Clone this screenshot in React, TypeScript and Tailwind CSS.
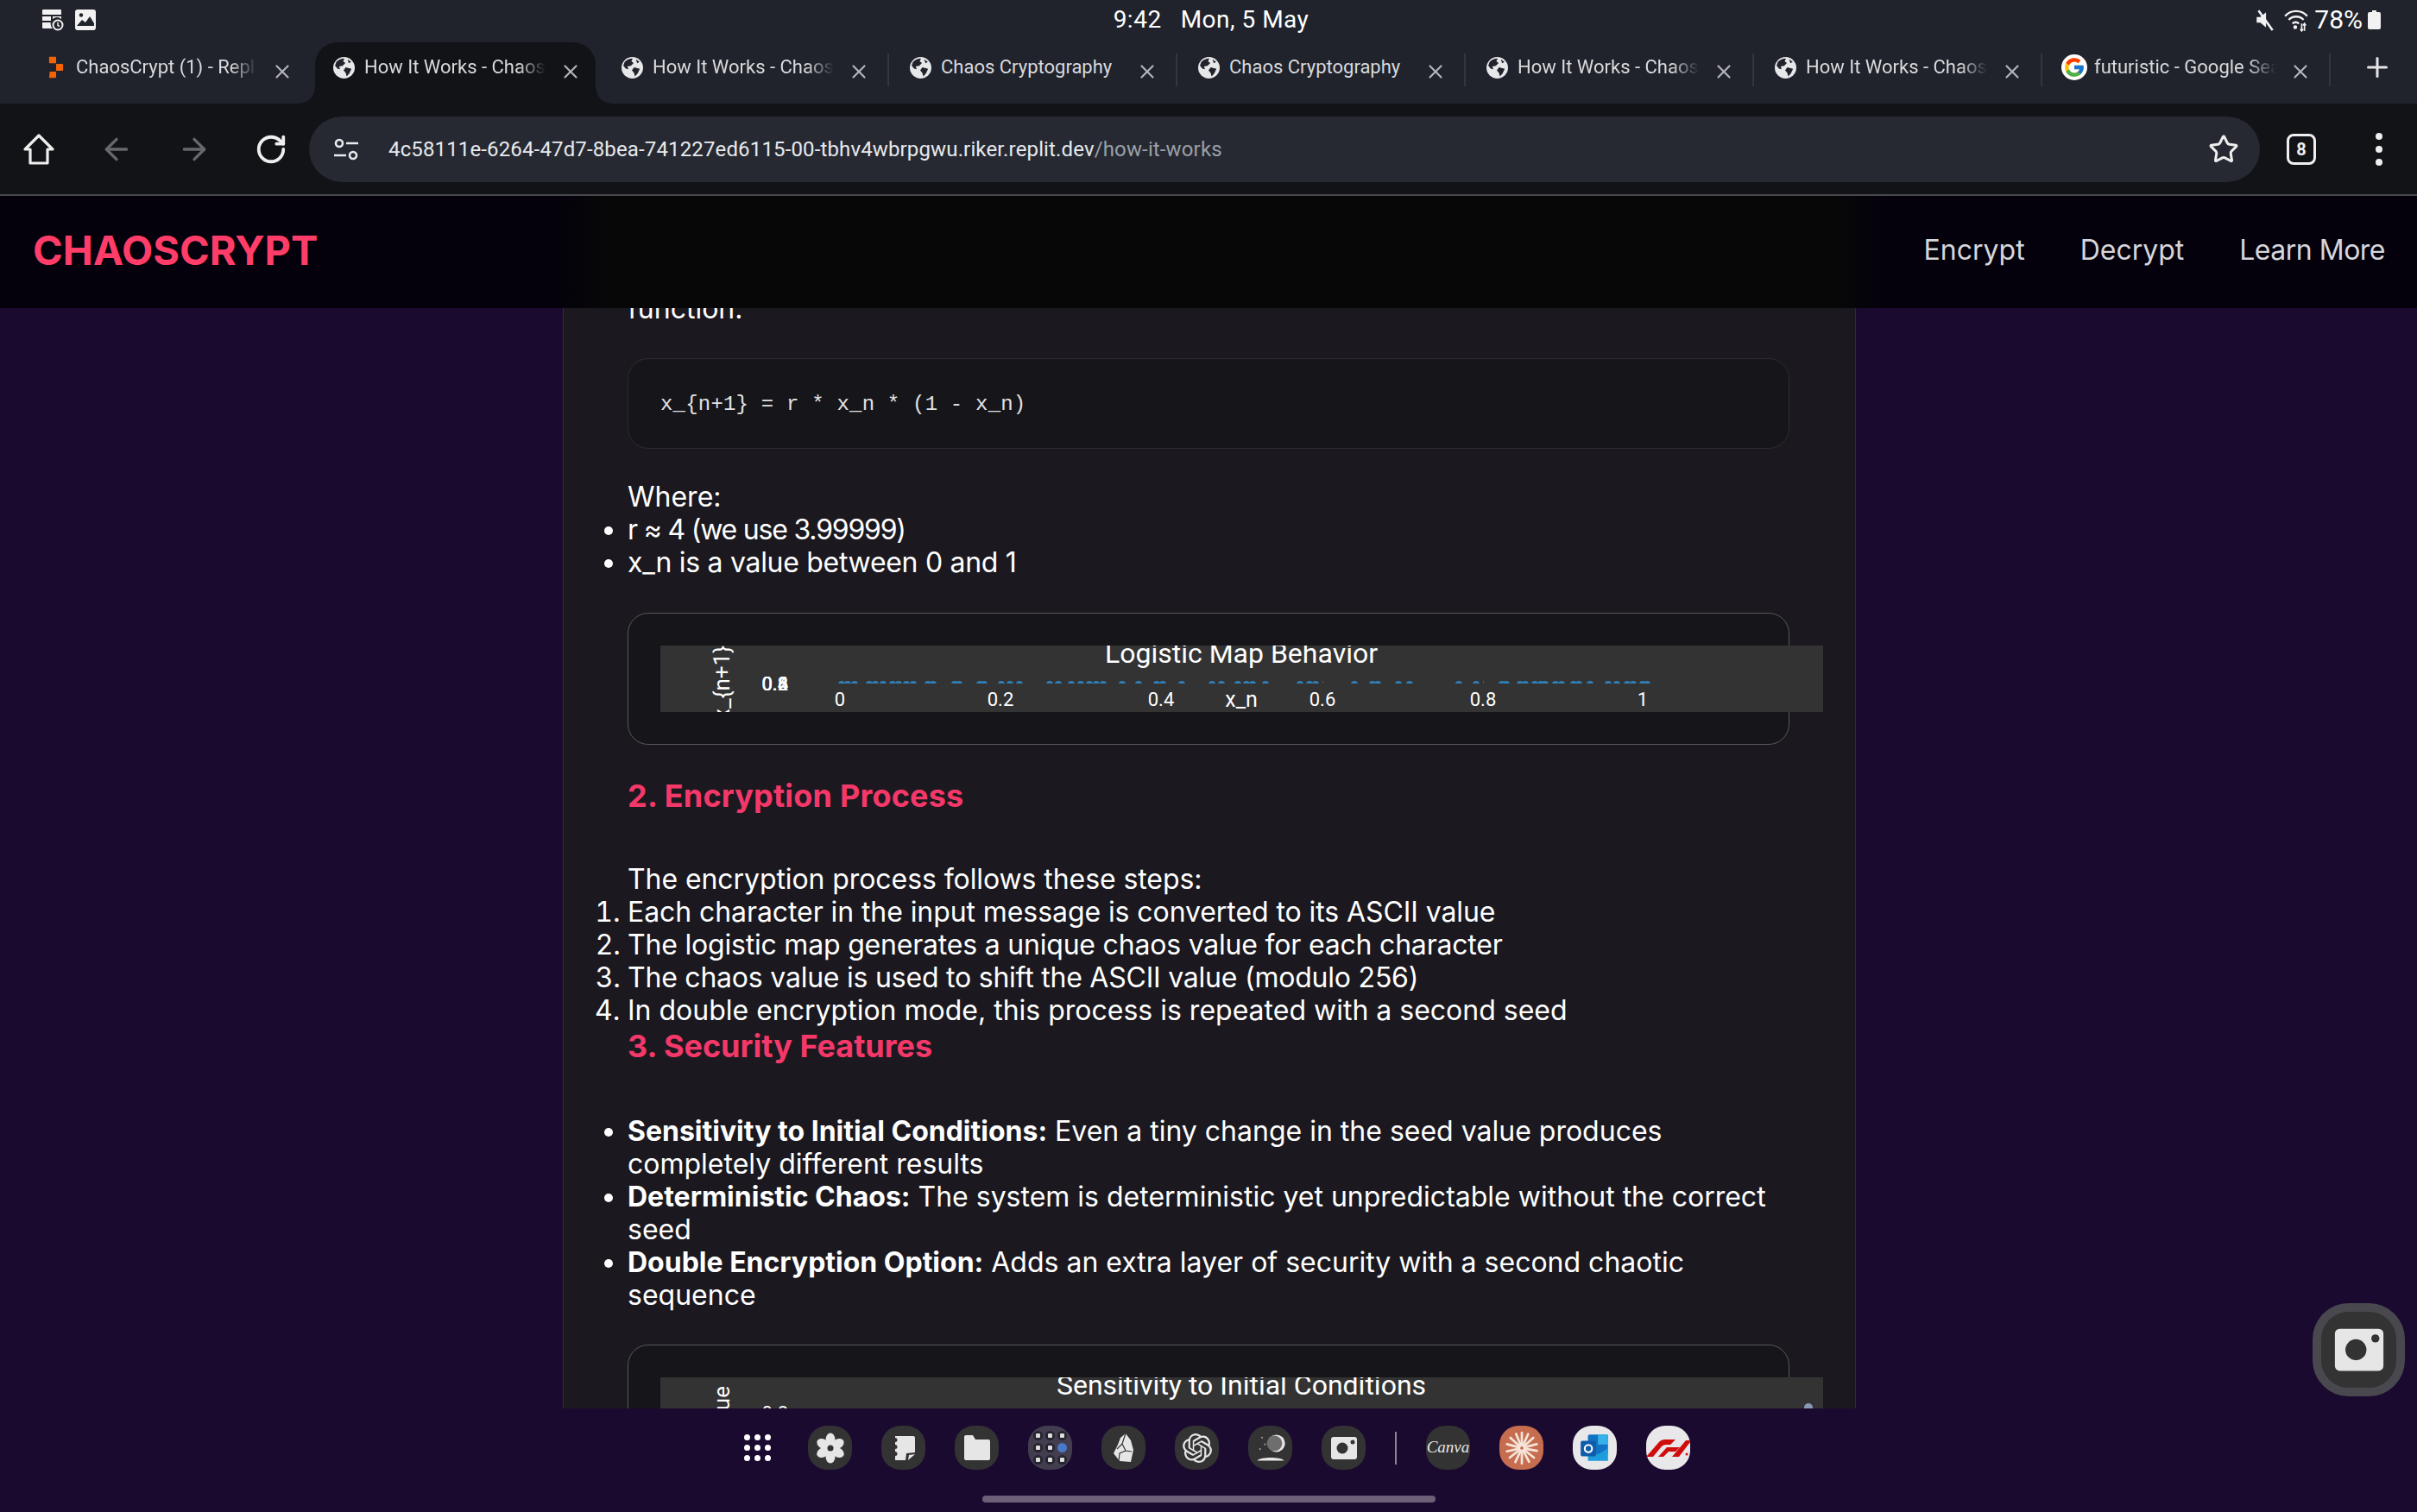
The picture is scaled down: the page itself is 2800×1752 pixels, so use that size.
import React from "react";
import { ArrowLeft, ArrowRight, Plus, RotateCw, Star, X } from "lucide-react";
import { FcGoogle } from "react-icons/fc";
import { SiOpenai } from "react-icons/si";

// --- CONTENT DATA ---
const tabs = [
  { title: "ChaosCrypt (1) - Replit", icon: "replit", sep: false },
  { title: "How It Works - Chaos-Hub", icon: "globe", active: true, sep: false },
  { title: "How It Works - Chaos-Hub", icon: "globe", sep: true },
  { title: "Chaos Cryptography", icon: "globe", sep: true, full: true },
  { title: "Chaos Cryptography", icon: "globe", sep: true, full: true },
  { title: "How It Works - Chaos-Hub", icon: "globe", sep: true },
  { title: "How It Works - Chaos-Hub", icon: "globe", sep: true },
  { title: "futuristic - Google Search", icon: "google", sep: true },
];

const dotsX = [
  975, 982, 990, 1007, 1014, 1023, 1034, 1041, 1050, 1058, 1075, 1081, 1106, 1111, 1135, 1140, 1160, 1170, 1181, 1216,
  1226, 1241, 1252, 1262, 1270, 1278, 1300, 1319, 1340, 1347, 1369, 1404, 1415, 1434, 1444, 1451, 1466, 1506, 1517,
  1524, 1569, 1590, 1596, 1620, 1633, 1690, 1710, 1740, 1745, 1761, 1767, 1778, 1785, 1790, 1802, 1809, 1823, 1829,
  1842, 1863, 1873, 1885, 1892, 1903, 1908,
];
const xTicks = [
  { label: "0", x: 973 },
  { label: "0.2", x: 1159 },
  { label: "0.4", x: 1345 },
  { label: "0.6", x: 1532 },
  { label: "0.8", x: 1718 },
  { label: "1", x: 1903 },
];

function Globe() {
  return (
    <svg viewBox="0 0 24 24" className="w-[25px] h-[25px] shrink-0">
      <circle cx="12" cy="12" r="12" fill="#e6e7e9" />
      <path
        fill="#20232c"
        d="M3.5 5.5C6 2.8 9 1.6 12.5 1.6L11 4.8l2.5 1.8-3 3.2-4 .7 1.2 3.2-3-.8L2 9.5zM14 11.5l6.3 1.8-2.3 5-3 3.3-1.2-4.2-2.3-2.6zM16 2.6l4 3-2.6 1.4z"
      />
    </svg>
  );
}

function Replit() {
  return (
    <svg viewBox="0 0 24 32" className="w-[20px] h-[26px] shrink-0">
      <path fill="#f26207" d="M2 1h9a1 1 0 0 1 1 1v8H3a1 1 0 0 1-1-1zM12 11h9a1 1 0 0 1 1 1v8a1 1 0 0 1-1 1h-9zM3 22h9v8a1 1 0 0 1-1 1H2z" />
    </svg>
  );
}

function Tab({ tab }: { tab: (typeof tabs)[number] }) {
  return (
    <div className="w-[334px] h-full flex shrink-0">
      <div className={`relative w-[325px] h-full flex items-center pl-[21px] pb-[13px] rounded-t-[26px] ${tab.active ? "bg-[#121317]" : ""}`}>
        {tab.active && (
          <>
            <div className="absolute bottom-0 -left-[18px] w-[18px] h-[18px] bg-[radial-gradient(circle_at_0_0,transparent_17px,#121317_18px)]" />
            <div className="absolute bottom-0 -right-[18px] w-[18px] h-[18px] bg-[radial-gradient(circle_at_100%_0,transparent_17px,#121317_18px)]" />
          </>
        )}
        <div className="w-[25px] flex justify-center shrink-0">
          {tab.icon === "globe" && <Globe />}
          {tab.icon === "replit" && <Replit />}
          {tab.icon === "google" && (
            <div className="w-[30px] h-[30px] rounded-full bg-white flex items-center justify-center shrink-0">
              <FcGoogle className="w-[26px] h-[26px]" />
            </div>
          )}
        </div>
        <div
          className={`ml-[11px] w-[210px] overflow-hidden whitespace-nowrap text-[22px] leading-[30px] text-[#d9dadc] font-['Roboto',sans-serif] ${
            tab.full ? "" : "[mask-image:linear-gradient(to_right,#000_85%,transparent_100%)]"
          }`}
        >
          {tab.title}
        </div>
        <X className="ml-[16px] mt-[10px] w-[26px] h-[26px] text-[#b4b5b8] shrink-0" strokeWidth={2} />
      </div>
      {tab.sep && <div className="ml-[4px] mt-[13px] w-[2px] h-[38px] bg-[#33363f]" />}
    </div>
  );
}

function StatusBar() {
  return (
    <div className="h-[49px] grid grid-cols-[1fr_auto_1fr] items-center pl-[48px] pr-[42px] pb-[4px] text-white font-['Roboto',sans-serif]">
      <div className="flex items-center gap-[12px]">
        <svg viewBox="0 0 26 26" className="w-[26px] h-[26px]">
          <path fill="#f2f2f2" d="M2 1h20a1 1 0 0 1 1 1v10a7 7 0 0 0-10 11H2a1 1 0 0 1-1-1V2a1 1 0 0 1 1-1z" />
          <path stroke="#20232c" strokeWidth="2" d="M1 8h22M1 15h12M12 8v7" />
          <circle cx="19" cy="19" r="5.5" fill="none" stroke="#f2f2f2" strokeWidth="2" />
          <path stroke="#f2f2f2" strokeWidth="1.5" fill="none" d="M19 16v3.5l2 1" />
        </svg>
        <svg viewBox="0 0 26 26" className="w-[26px] h-[26px]">
          <rect x="1" y="1" width="24" height="24" rx="3" fill="#f2f2f2" />
          <path fill="#20232c" d="M3 20l6-7 4 3 5-7 5 8v3H3z" />
          <circle cx="8" cy="7.5" r="2.2" fill="#20232c" />
        </svg>
      </div>
      <div className="flex gap-[22px] text-[28px] leading-[34px] tracking-[0.5px]">
        <span>9:42</span>
        <span>Mon, 5 May</span>
      </div>
      <div className="flex items-center justify-end gap-[6px]">
        <svg viewBox="0 0 24 24" className="w-[26px] h-[26px]">
          <path fill="#f2f2f2" d="M3 9h4l6-5v16l-6-5H3z" />
          <path stroke="#f2f2f2" strokeWidth="2.4" d="M5 2l15 21" />
        </svg>
        <svg viewBox="0 0 28 28" className="w-[30px] h-[30px] ml-[2px]" fill="none" stroke="#f2f2f2" strokeWidth="2.2">
          <path d="M2 10a16 16 0 0 1 24 0M6 14a11 11 0 0 1 16 0M10 18a5.500 5.500 0 0 1 7 0" />
          <circle cx="13" cy="22" r="1" fill="#f2f2f2" />
          <path strokeWidth="1.6" d="M20 18v8M23 26v-8M18.500 24l1.500 2 1.500-2M21.500 20l1.500-2 1.500 2" />
        </svg>
        <span className="text-[30px] leading-[34px]">78%</span>
        <svg viewBox="0 0 15 22" className="w-[15px] h-[22px]">
          <path fill="#f2f2f2" d="M5 0h5v2h3a2 2 0 0 1 2 2v16a2 2 0 0 1-2 2H2a2 2 0 0 1-2-2V4a2 2 0 0 1 2-2h3z" />
        </svg>
      </div>
    </div>
  );
}

function Toolbar() {
  return (
    <div className="h-[107px] bg-[#121317] border-b-2 border-[#48494d] flex items-center pl-[25px]">
      <div className="flex items-center gap-[50px]">
        <svg viewBox="0 0 40 40" className="w-[40px] h-[40px]" fill="none" stroke="#eeeeee" strokeWidth="3.2" strokeLinejoin="round">
          <path d="M20 4L36 20H30V36H10V20H4Z" />
        </svg>
        <ArrowLeft className="w-[40px] h-[40px] text-[#66686c]" strokeWidth={2} />
        <ArrowRight className="w-[40px] h-[40px] text-[#66686c]" strokeWidth={2} />
        <RotateCw className="w-[38px] h-[38px] text-[#eeeeee]" strokeWidth={2.4} />
      </div>
      <div className="ml-[25px] w-[2260px] h-[76px] rounded-full bg-[#262932] flex items-center pl-[28px] pr-[24px] shrink-0">
        <svg viewBox="0 0 30 30" className="w-[30px] h-[30px] shrink-0" fill="none" stroke="#e8eaed" strokeWidth="2.6">
          <circle cx="7" cy="8" r="4" />
          <path d="M15 8h14M1 22h14" />
          <circle cx="23" cy="22" r="4" />
        </svg>
        <div className="ml-[34px] flex-1 whitespace-nowrap text-[24px] tracking-[0.14px] text-[#e8eaed] font-['Roboto',sans-serif]">
          4c58111e-6264-47d7-8bea-741227ed6115-00-tbhv4wbrpgwu.riker.replit.dev
          <span className="text-[#9aa0a6]">/how-it-works</span>
        </div>
        <Star className="w-[36px] h-[36px] text-[#eeeeee]" strokeWidth={2} />
      </div>
      <div className="ml-[31px] w-[34px] h-[36px] rounded-[8px] border-[3px] border-[#eeeeee] flex items-center justify-center text-[20px] font-bold text-[#eeeeee] font-['Roboto',sans-serif] shrink-0">
        8
      </div>
      <div className="ml-[69px] flex flex-col gap-[7px] shrink-0">
        <div className="w-[8px] h-[8px] rounded-full bg-[#eeeeee]" />
        <div className="w-[8px] h-[8px] rounded-full bg-[#eeeeee]" />
        <div className="w-[8px] h-[8px] rounded-full bg-[#eeeeee]" />
      </div>
    </div>
  );
}

function LogisticPlot() {
  return (
    <svg width="1347" height="77" className="block shrink-0 font-['Roboto',sans-serif]">
      <defs>
        <clipPath id="band">
          <rect x="0" y="0" width="1347" height="44" />
        </clipPath>
      </defs>
      <rect width="1347" height="77" fill="#333333" />
      <text x="673" y="20" textAnchor="middle" fill="#ffffff" className="text-[32px]">
        Logistic Map Behavior
      </text>
      <g clipPath="url(#band)">
        {dotsX.map((x) => (
          <circle key={x} cx={x - 765} cy="45" r="4" fill="#2f7fb8" />
        ))}
      </g>
      <rect x="767" y="41" width="1" height="3" fill="#555" />
      <rect x="953" y="41" width="1" height="3" fill="#555" />
      {xTicks.map((t) => (
        <text key={t.label} x={t.x - 765} y="70" textAnchor="middle" fill="#ffffff" className="text-[22px]">
          {t.label}
        </text>
      ))}
      <text x="673" y="71" textAnchor="middle" fill="#ffffff" className="text-[25px]">
        x_n
      </text>
      {["0.2", "0.4", "0.6", "0.8"].map((t) => (
        <text key={t} x="148" y="52" textAnchor="end" fill="#ffffff" className="text-[22px]">
          {t}
        </text>
      ))}
      <text transform="translate(80 0) rotate(-90)" textAnchor="end" fill="#ffffff" className="text-[26px]">
        x_{"{n+1}"}
      </text>
    </svg>
  );
}

function SensitivityPlot() {
  return (
    <svg width="1347" height="77" className="block shrink-0 font-['Roboto',sans-serif]">
      <rect width="1347" height="77" fill="#333333" />
      <text x="673" y="20" textAnchor="middle" fill="#ffffff" className="text-[32px]">
        Sensitivity to Initial Conditions
      </text>
      <text transform="translate(80 10) rotate(-90)" textAnchor="end" fill="#ffffff" className="text-[26px]">
        Value
      </text>
      <text x="148" y="49" textAnchor="end" fill="#ffffff" className="text-[22px]">
        0.8
      </text>
      <circle cx="1330" cy="35" r="5" fill="#8a99b8" />
    </svg>
  );
}

function Article() {
  return (
    <div className="-mt-[18px] pl-[74px] text-[32px] leading-[38px] text-white font-['Inter',sans-serif]">
      <p>function.</p>

      <div className="mt-[38px] w-[1346px] h-[105px] rounded-[24px] border border-[#2c2c32] bg-[#16151a] flex items-center px-[37px] pt-[2px] text-[24px] tracking-[0.2px] text-[#e2e2e2] font-['Liberation_Mono',monospace]">
        {"x_{n+1} = r * x_n * (1 - x_n)"}
      </div>

      <p className="mt-[37px]">Where:</p>
      <ul className="list-disc">
        <li className="tracking-[-1.2px]">r ≈ 4 (we use 3.99999)</li>
        <li className="tracking-[-0.3px]">x_n is a value between 0 and 1</li>
      </ul>

      <div className="mt-[39px] w-[1346px] h-[153px] rounded-[24px] border border-[#58585c] bg-[#16151a] pl-[37px] pt-[37px]">
        <LogisticPlot />
      </div>

      <h3 className="mt-[37px] text-[36px] leading-[44px] tracking-[0.2px] font-bold text-[#f5386a]">2. Encryption Process</h3>
      <p className="mt-[56px] tracking-[-0.08px]">The encryption process follows these steps:</p>
      <ol className="list-decimal">
        <li className="tracking-[-0.08px]">Each character in the input message is converted to its ASCII value</li>
        <li className="tracking-[-0.2px]">The logistic map generates a unique chaos value for each character</li>
        <li className="tracking-[-0.22px]">The chaos value is used to shift the ASCII value (modulo 256)</li>
        <li>In double encryption mode, this process is repeated with a second seed</li>
      </ol>

      <h3 className="text-[36px] leading-[44px] font-bold text-[#f5386a]">3. Security Features</h3>
      <ul className="mt-[58px] w-[1346px] list-disc">
        <li>
          <strong className="font-bold">Sensitivity to Initial Conditions:</strong> Even a tiny change in the seed value produces completely different results
        </li>
        <li>
          <strong className="font-bold">Deterministic Chaos:</strong> The system is deterministic yet unpredictable without the correct seed
        </li>
        <li>
          <strong className="font-bold">Double Encryption Option:</strong> Adds an extra layer of security with a second chaotic sequence
        </li>
      </ul>

      <div className="mt-[38px] w-[1346px] h-[153px] rounded-[24px] border border-[#58585c] bg-[#16151a] pl-[37px] pt-[37px]">
        <SensitivityPlot />
      </div>
    </div>
  );
}

// Dock icons
function DockIcon({ children, bg = "bg-[#333333]" }: { children: React.ReactNode; bg?: string }) {
  return <div className={`w-[51px] h-[51px] rounded-[22px] flex items-center justify-center shrink-0 ${bg}`}>{children}</div>;
}

function Flower() {
  return (
    <svg viewBox="0 0 36 36" className="w-[36px] h-[36px]">
      {[0, 60, 120, 180, 240, 300].map((a) => (
        <ellipse key={a} cx="18" cy="8" rx="5.500" ry="7.500" fill="#e6e6e6" transform={`rotate(${a} 18 18)`} />
      ))}
      <circle cx="18" cy="18" r="3.500" fill="#333333" />
    </svg>
  );
}

function CameraGlyph({ className }: { className: string }) {
  return (
    <svg viewBox="0 0 32 32" className={className}>
      <rect x="1" y="3" width="30" height="26" rx="3" fill="#e6e6e6" />
      <circle cx="14" cy="16" r="6.500" fill="#333333" />
      <circle cx="26" cy="9" r="2.500" fill="#333333" />
    </svg>
  );
}

function Dock() {
  return (
    <div className="h-[120px] flex flex-col items-center">
      <div className="mt-[20px] flex items-center gap-[34px] pl-[10px]">
        <div className="w-[50px] flex justify-center">
          <div className="w-[31px] grid grid-cols-3 gap-[5px]">
            {[0, 1, 2, 3, 4, 5, 6, 7, 8].map((i) => (
              <div key={i} className="w-[7px] h-[7px] rounded-full bg-white" />
            ))}
          </div>
        </div>
        <DockIcon>
          <Flower />
        </DockIcon>
        <DockIcon>
          <svg viewBox="0 0 32 32" className="w-[32px] h-[32px]">
            <path fill="#e6e6e6" d="M6 2h21a2 2 0 0 1 2 2v17l-10 1-1 8H6V25a2 2 0 0 0 0-5v-3a2 2 0 0 0 0-5V9a2 2 0 0 0 0-5z" />
            <path fill="#e6e6e6" d="M21 30l1-6 7-1z" />
          </svg>
        </DockIcon>
        <DockIcon>
          <svg viewBox="0 0 32 32" className="w-[32px] h-[32px]">
            <path fill="#e6e6e6" d="M1 3a2 2 0 0 1 2-2h8l3 5h15a2 2 0 0 1 2 2v20a2 2 0 0 1-2 2H3a2 2 0 0 1-2-2z" />
          </svg>
        </DockIcon>
        <DockIcon bg="bg-[#423e50]">
          <div className="grid grid-cols-3 gap-[3px]">
            {[0, 1, 2, 3, 4, 5, 6, 7, 8].map((i) => (
              <div key={i} className={`w-[11px] h-[11px] rounded-full flex items-center justify-center ${i === 5 ? "bg-[#4a78c8]" : "bg-[#26242e]"}`}>
                {i !== 5 && <div className="w-[5px] h-[5px] rounded-[1px] bg-[#dddddd]" />}
              </div>
            ))}
          </div>
        </DockIcon>
        <DockIcon>
          <svg viewBox="0 0 32 36" className="w-[32px] h-[38px]">
            <path fill="#e6e6e6" d="M18 1l6 8 3 11-3 14-13-1-7-9 5-10 3-8z" />
            <path stroke="#333333" strokeWidth="1.2" fill="none" d="M18 1l-4 12 4 8 7 1M18 21l-7 3-1 9M14 13l-6 6" />
          </svg>
        </DockIcon>
        <DockIcon>
          <SiOpenai className="w-[34px] h-[34px] text-[#e6e6e6]" />
        </DockIcon>
        <DockIcon>
          <svg viewBox="0 0 36 36" className="w-[40px] h-[40px]">
            <circle cx="24" cy="13" r="9" fill="#e6e6e6" />
            <circle cx="22" cy="13" r="8" fill="#6e6e6e" />
            <path fill="#e6e6e6" d="M4 31c4-4 24-4 28 0z" />
            <circle cx="9" cy="7" r="1" fill="#999" />
            <circle cx="12" cy="14" r="1" fill="#999" />
            <circle cx="7" cy="19" r="1" fill="#999" />
          </svg>
        </DockIcon>
        <DockIcon>
          <CameraGlyph className="w-[32px] h-[32px]" />
        </DockIcon>
        <div className="w-[2px] h-[38px] bg-[#8a8494]" />
        <DockIcon>
          <span className="text-[19px] italic text-[#e6e6e6] font-['Liberation_Serif',serif]">Canva</span>
        </DockIcon>
        <DockIcon bg="bg-[#c56d4e]">
          <svg viewBox="0 0 40 40" className="w-[42px] h-[42px]" stroke="#f6e4da" strokeWidth="2.6" strokeLinecap="round">
            {[0, 24, 48, 75, 100, 128, 152, 180, 205, 232, 258, 285, 312, 338].map((a) => (
              <path key={a} d="M20 17V3" transform={`rotate(${a} 20 20)`} />
            ))}
          </svg>
        </DockIcon>
        <DockIcon bg="bg-[#e8e8ea]">
          <svg viewBox="0 0 36 36" className="w-[38px] h-[38px]">
            <rect x="10" y="3" width="22" height="22" rx="2" fill="#1273c4" />
            <rect x="21" y="3" width="11" height="11" fill="#36b0e8" />
            <path fill="#1d9ddb" d="M10 18l11 7 11-7v14H10z" />
            <rect x="2" y="10" width="17" height="17" rx="2" fill="#0f5cab" />
            <circle cx="10.500" cy="18.500" r="4" fill="none" stroke="#ffffff" strokeWidth="2" />
          </svg>
        </DockIcon>
        <DockIcon bg="bg-[#e8e8ea]">
          <svg viewBox="0 0 51 24" className="w-[51px] h-[24px]">
            <path fill="#d10c0c" d="M0 22L14 6q3-4 8-4h12l-6 6H23q-3 0-5 2l-10 12zM14 22l10-11h15l-5 5h-8l-6 6zM30 22L46 3h5v2L38 22z" />
            <circle cx="47" cy="19" r="1.500" fill="#d10c0c" />
          </svg>
        </DockIcon>
      </div>
      <div className="mt-[30px] w-[525px] h-[8px] rounded-full bg-[#6b6078]" />
    </div>
  );
}

export default function App() {
  return (
    <div className="relative w-[2800px] h-[1752px] overflow-hidden flex flex-col bg-[#1b0a30]">
      {/* Browser chrome */}
      <div className="bg-[#20232c]">
        <StatusBar />
        <div className="h-[71px] flex pl-[31px]">
          {tabs.map((tab, i) => (
            <Tab key={i} tab={tab} />
          ))}
          <Plus className="ml-[33px] mt-[11px] w-[36px] h-[36px] text-[#e4e4e4]" strokeWidth={2} />
        </div>
      </div>
      <Toolbar />

      {/* Site header */}
      <header className="h-[130px] shrink-0 bg-[linear-gradient(to_right,#04010c_23%,#070708_25%,#070708_76%,#04010c_78%)] pl-[38px] pr-[37px] pb-[4px] flex items-center justify-between font-['Inter',sans-serif]">
        <div className="text-[47px] font-bold text-[#ff3d68]">CHAOSCRYPT</div>
        <nav className="flex items-center gap-[64px] text-[32px] text-[#d6d6da]">
          <a>Encrypt</a>
          <a>Decrypt</a>
          <a className="tracking-[-0.5px]">Learn More</a>
        </nav>
      </header>

      {/* Page body */}
      <main className="flex-1 min-h-0">
        <div className="ml-[652px] w-[1498px] h-full overflow-hidden bg-[#1b191f] border-x border-[#2e2c38]">
          <Article />
        </div>
      </main>

      <Dock />

      {/* Floating screenshot button */}
      <div className="absolute left-[2679px] top-[1510px] w-[107px] h-[108px] rounded-[42px] border-[10px] border-[#48484e] bg-[#333333] flex items-center justify-center">
        <CameraGlyph className="w-[60px] h-[60px]" />
      </div>
    </div>
  );
}
